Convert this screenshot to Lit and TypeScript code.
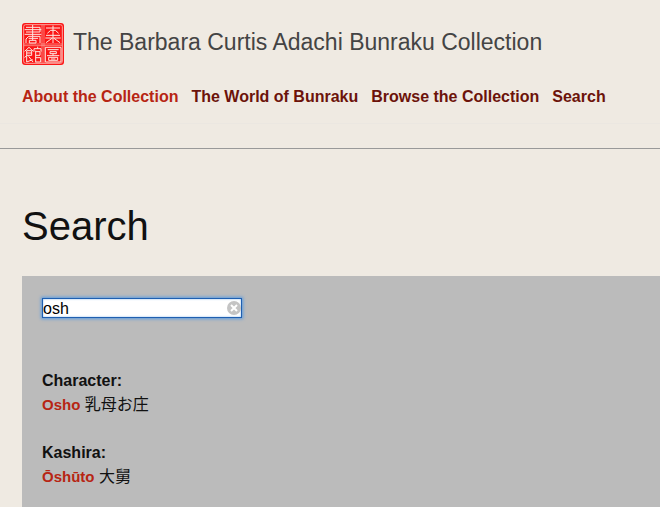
import { LitElement, html, css, nothing } from "lit";
import { customElement, state } from "lit/decorators.js";

interface ResultGroup {
  label: string;
  name: string;
  native: string;
}

@customElement("collection-seal")
export class CollectionSeal extends LitElement {
  static styles = css`
    :host {
      display: block;
      flex: none;
    }
    .seal {
      display: block;
      width: 42px;
      height: 42px;
    }
  `;

  render() {
    return html`
      <svg class="seal" viewBox="0 0 126 126" aria-hidden="true">
        <rect width="126" height="126" rx="9" fill="#fb1616" />
        <rect x="5" y="5" width="116" height="116" rx="6" fill="none" stroke="#fba59e" stroke-width="3" />
        <path d="M60 6V120M66 6V120M6 63H120M6 68H120" fill="none" stroke="#fcb0a8" stroke-width="2" />
        <g fill="none" stroke="#fde9e2" stroke-width="3">
          <path d="M32 6V39M12 13H54M54 13V27M8 20H58M12 27H54M8 34H58" />
          <path d="M12 60V48L20 40H54V60M20 46H48M22 52H42V60H22ZM32 40V52" />
          <path d="M93 8V60M72 15H114M76 31L86 22H100L110 31M72 37H114M70 45H116M90 46L72 59M96 46L114 59" />
          <path d="M8 85L21 73L34 85M14 83H29V97H14ZM14 90H29M14 97V117L32 110M20 100L33 117M8 104L14 97" />
          <path d="M36 86V77H57V86M41 83V118M41 86H54V97H41M41 104H56V117H41M47 71V77" />
          <path d="M70 73H117V117H70ZM77 80H110M84 86H103V92H84ZM75 98H112M80 103H107V112H80ZM87 108H100M93 92V98" />
        </g>
      </svg>
    `;
  }
}

@customElement("app-root")
export class AppRoot extends LitElement {
  @state() private term = "osh";

  private links = [
    { text: "About the Collection", current: true },
    { text: "The World of Bunraku", current: false },
    { text: "Browse the Collection", current: false },
    { text: "Search", current: false },
  ];

  private results: ResultGroup[] = [
    { label: "Character:", name: "Osho", native: "乳母お庄" },
    { label: "Kashira:", name: "Ōshūto", native: "大舅" },
  ];

  static styles = css`
    :host {
      display: flex;
      flex-direction: column;
      min-height: 100vh;
      background: #efeae2;
      color: #111;
      font: 16px/24px "Liberation Sans", "Noto Sans CJK JP", Arial, sans-serif;
    }
    a {
      color: #b72513;
      font-weight: bold;
      text-decoration: none;
    }
    .masthead {
      padding-top: 23px;
      border-bottom: 1px solid #999;
    }
    .brand {
      display: flex;
      align-items: center;
      gap: 9px;
      padding: 0 22px;
    }
    .title {
      margin: 0;
      padding-bottom: 4px;
      color: #444;
      font-size: 23px;
      line-height: 32px;
      font-weight: normal;
      white-space: nowrap;
    }
    .nav {
      display: flex;
      flex-wrap: wrap;
      gap: 0 13px;
      margin-bottom: 24px;
      padding: 20px 22px 14px;
      border-bottom: 1px solid #ebe7e1;
    }
    .nav a {
      color: #6c130a;
    }
    .nav a.current {
      color: #b72513;
    }
    .content {
      display: flex;
      flex-direction: column;
      flex: 1;
      padding-left: 22px;
    }
    .heading {
      margin: 53px 0 26px;
      font-size: 40px;
      line-height: 48px;
      font-weight: normal;
    }
    .panel {
      flex: 1;
      padding: 22px 20px 16px;
      background: #bbb;
    }
    .field {
      position: relative;
      width: 200px;
      margin-bottom: 51px;
    }
    .input {
      display: block;
      box-sizing: border-box;
      width: 100%;
      height: 20px;
      padding: 1px 18px 0 0;
      border: 1px solid #1f5fb0;
      border-radius: 0;
      outline: none;
      background: #fff;
      color: #000;
      box-shadow: 0 0 3px 1px #5b9be0, inset 0 0 2px #7fb2ec;
      font: inherit;
      line-height: 18px;
    }
    .clear {
      position: absolute;
      top: 3px;
      right: 1px;
      width: 14px;
      height: 14px;
      padding: 0;
      border: 0;
      background: none;
    }
    .clear svg {
      display: block;
    }
    .group {
      margin: 0 0 24px;
    }
    .group:last-child {
      margin-bottom: 0;
    }
    .group dt {
      font-weight: bold;
    }
    .group dd {
      margin: 0;
    }
    .group a {
      font-size: 15px;
    }
  `;

  private onInput(e: Event) {
    this.term = (e.target as HTMLInputElement).value;
  }

  render() {
    return html`
      <header class="masthead">
        <div class="brand">
          <collection-seal></collection-seal>
          <h2 class="title">The Barbara Curtis Adachi Bunraku Collection</h2>
        </div>
        <nav class="nav">
          ${this.links.map(
            (l) => html`<a href="#" class=${l.current ? "current" : nothing}>${l.text}</a>`
          )}
        </nav>
      </header>
      <main class="content">
        <h1 class="heading">Search</h1>
        <section class="panel">
          <div class="field">
            <input class="input" type="text" aria-label="Search" .value=${this.term} @input=${this.onInput} />
            <button class="clear" type="button" aria-label="Clear" @click=${() => (this.term = "")}>
              <svg width="14" height="14" viewBox="0 0 14 14">
                <circle cx="7" cy="7" r="7" fill="#c4c4c4" />
                <path d="M4 4L10 10M10 4L4 10" stroke="#fff" stroke-width="2" />
              </svg>
            </button>
          </div>
          ${this.results.map(
            (r) => html`
              <dl class="group">
                <dt>${r.label}</dt>
                <dd><a href="#">${r.name}</a> <span lang="ja">${r.native}</span></dd>
              </dl>
            `
          )}
        </section>
      </main>
    `;
  }
}
